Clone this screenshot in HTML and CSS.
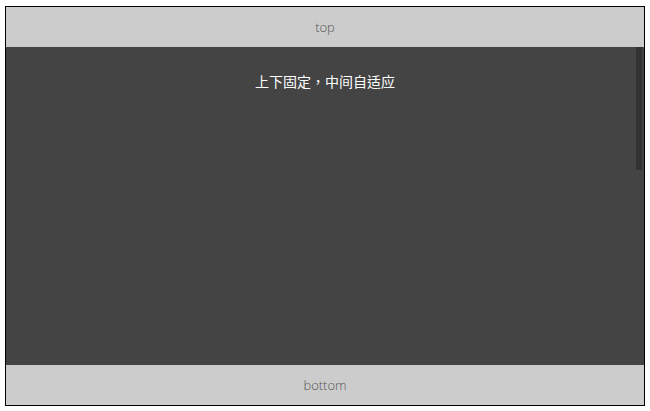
FILE: index.html
```html
<!DOCTYPE html>
<html lang="zh-TW">
<head>
    <meta charset="UTF-8">
    <title>上下固定，中间自适应</title>
    <link rel="stylesheet" href="styles.css">
</head>
<body>
    <div class="wrap">
        <header class="bar">top</header>
        <main class="content">
            <p>上下固定，中间自适应</p>
            <div class="scrollbar"></div>
        </main>
        <footer class="bar">bottom</footer>
    </div>
</body>
</html>
```
FILE: styles.css
```css
*{
    box-sizing:border-box;
}
body{
    margin:0;
    background:#fff;
    font:14px/20px "Noto Sans CJK TC",sans-serif;
}
.wrap{
    display:flex;
    flex-direction:column;
    height:100vh;
    padding:6px 5px 5px;
    text-align:center;
}
.bar{
    flex:none;
    padding:10px 0;
    border:1px solid #000;
    background:#ccc;
    color:#555;
    font-family:"Open Sans",sans-serif;
    font-size:13px;
    font-weight:300;
}
header.bar{
    border-bottom:0;
}
footer.bar{
    border-top:0;
}
.content{
    position:relative;
    flex:1;
    padding:24px 0;
    border:solid #000;
    border-width:0 1px;
    background:#444;
    color:#fff;
}
.content p{
    margin:0;
}
/* scroll thumb lies over the content */
.scrollbar{
    position:absolute;
    top:0;
    right:2px;
    width:6px;
    height:123px;
    background:#333;
}
```
